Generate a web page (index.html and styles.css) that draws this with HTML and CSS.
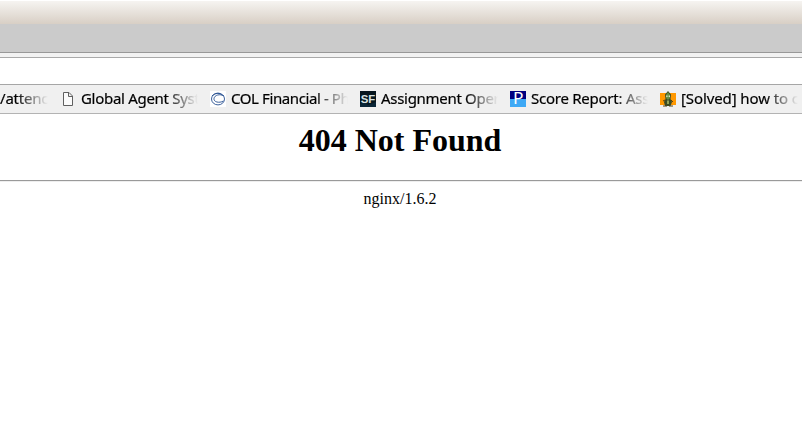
FILE: index.html
```html
<!DOCTYPE html>
<html lang="en">
<head>
<meta charset="utf-8">
<title>404 Not Found</title>
<link rel="stylesheet" href="styles.css">
</head>
<body>
<div class="titlebar"></div>
<div class="tabstrip"></div>
<div class="toolbar-edge"></div>
<div class="address"></div>
<nav class="bookmarks">
  <a class="bookmark first"><span class="label">/attenc</span></a>
  <a class="bookmark">
    <svg class="icon" viewBox="0 0 16 16"><path d="M3.5 1.5H9L12.500 5V14.500H3.500ZM8.500 1.500V5.500H12.500" fill="#fbfbfb" stroke="#606060"/></svg>
    <span class="label global">Global Agent Syst</span>
  </a>
  <a class="bookmark">
    <svg class="icon" viewBox="0 0 16 16"><rect width="16" height="16" fill="#fff"/><g fill="none" stroke="#264f91"><ellipse cx="8" cy="8" rx="6.500" ry="5.900" stroke-width="0.900"/><path d="M14 5C10 2.500 4.500 4 4 7.500S9 12.500 13.500 10M2 5C5 1.800 10 1.500 12.500 4.500" stroke-width="0.900"/></g></svg>
    <span class="label col">COL Financial - Ph</span>
  </a>
  <a class="bookmark">
    <svg class="icon" viewBox="0 0 16 16"><rect width="16" height="16" fill="#06151e"/><path d="M0 13L5 11L8 14L16 11V16H0Z" fill="#0a2638"/><text class="sf" x="0.800" y="11.500" textLength="14.500" lengthAdjust="spacingAndGlyphs">SF</text></svg>
    <span class="label assignment">Assignment Oper</span>
  </a>
  <a class="bookmark">
    <svg class="icon" viewBox="0 0 16 16"><rect width="16" height="8" fill="#000080"/><rect y="8" width="16" height="8" fill="#3fa9f5"/><text class="p" x="3" y="13" textLength="10.500" lengthAdjust="spacingAndGlyphs">P</text></svg>
    <span class="label score">Score Report: Ass</span>
  </a>
  <a class="bookmark">
    <svg class="icon" viewBox="0 0 16 16"><rect y="2" width="16" height="12" fill="#ff9800"/><path d="M8 0L11 3.500L10.500 8L12 11L10.500 15H5L4 11L5.500 8L5 3.500Z" fill="#3b4b25"/><path d="M8 1L10 4V7L8 9L6 7V4Z" fill="#649044"/><path d="M6.300 4.500H7.500V6H6.300ZM8.700 4.500H9.900V6H8.700Z" fill="#e4edcf"/><path d="M7 9.500H9V13H7Z" fill="#91a45c"/><path d="M3 10L5 9M11 9L13 11M3 15H7M9 15H13" stroke="#554316"/></svg>
    <span class="label solved">[Solved] how to c</span>
  </a>
</nav>
<main class="page">
  <h1>404 Not Found</h1>
  <hr>
  <p>nginx/1.6.2</p>
</main>
</body>
</html>
```
FILE: styles.css
```css
* { box-sizing: border-box; }
body { margin: 0; background: #fff; color: #000; overflow: hidden; }
.titlebar { height: 24px; border-top: 1px solid #fff; background: linear-gradient(#f6f4f1, #d8cfc5); }
.tabstrip { height: 29px; background: #cbcbcb; border-bottom: 1px solid #989898; }
.toolbar-edge { height: 5px; background: #f2f2f2; border-bottom: 1px solid #a9a9a9; }
.address { height: 26px; background: #fff; }
.bookmarks {
  display: flex;
  height: 30px;
  background: #f0f0f0;
  border-top: 1px solid #a6a6a6;
  border-bottom: 1px solid #b3b3b3;
  font: 15px/26px "Noto Sans", sans-serif;
}
.bookmark { display: flex; flex: 0 0 138px; width: 138px; min-width: 0; align-items: center; gap: 5px; margin-right: 12px; }
.bookmark.first { flex-basis: 48px; width: 48px; }
.icon { flex: 0 0 16px; width: 16px; height: 16px; }
.label {
  flex: 1;
  min-width: 0;
  height: 28px;
  overflow: hidden;
  white-space: nowrap;
  -webkit-text-stroke: 0.2px #000;
  -webkit-mask-image: linear-gradient(to right, #000 calc(100% - 32px), transparent);
  mask-image: linear-gradient(to right, #000 calc(100% - 32px), transparent);
}
.first .label { letter-spacing: -0.2px; }
.global { letter-spacing: -0.3px; }
.col { letter-spacing: -0.4px; }
.assignment { letter-spacing: -0.3px; }
.score { letter-spacing: -0.25px; }
.solved { letter-spacing: -0.1px; }
.sf { font: bold 10px "Liberation Sans", sans-serif; fill: #d7e2e2; }
.p { font: 16px "Noto Sans", sans-serif; fill: #fff; }
.page { padding-right: 2px; text-align: center; font-family: "Liberation Serif", serif; }
h1 { margin: 8px 0 21px; font-size: 32px; line-height: 37px; }
hr { margin: 0 -2px 8px 0; border-color: #9a9a9a #eee #eee #9a9a9a; border-style: solid; border-width: 1px 0; }
p { margin: 0; font-size: 16px; line-height: 18px; }
```
